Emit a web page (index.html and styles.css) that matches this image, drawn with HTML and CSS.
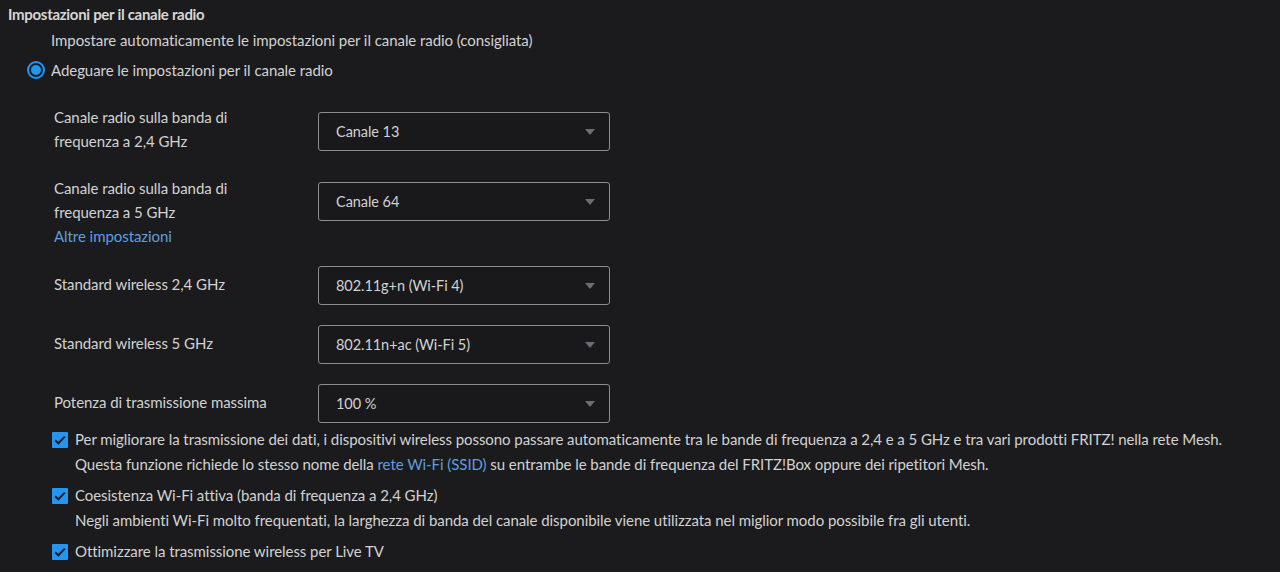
FILE: index.html
```html
<!DOCTYPE html>
<html lang="it">
<head>
<meta charset="utf-8">
<link rel="stylesheet" href="styles.css">
</head>
<body>
<div class="page">
  <h2 class="heading">Impostazioni per il canale radio</h2>
  <div class="option plain">Impostare automaticamente le impostazioni per il canale radio (consigliata)</div>
  <div class="option radio-row">
    <span class="radio"><span class="dot"></span></span>
    <span>Adeguare le impostazioni per il canale radio</span>
  </div>

  <div class="settings">
    <div class="row row1">
      <div class="label">Canale radio sulla banda di<br>frequenza a 2,4 GHz</div>
      <div class="select sel-offset7"><span>Canale 13</span><span class="arrow"></span></div>
    </div>
    <div class="row row2">
      <div class="label">Canale radio sulla banda di<br>frequenza a 5 GHz<br><a class="link" href="#">Altre impostazioni</a></div>
      <div class="select sel-offset6"><span>Canale 64</span><span class="arrow"></span></div>
    </div>
    <div class="row row-single">
      <div class="label single">Standard wireless 2,4 GHz</div>
      <div class="select"><span>802.11g+n (Wi-Fi 4)</span><span class="arrow"></span></div>
    </div>
    <div class="row row-single">
      <div class="label single">Standard wireless 5 GHz</div>
      <div class="select"><span>802.11n+ac (Wi-Fi 5)</span><span class="arrow"></span></div>
    </div>
    <div class="row row-single">
      <div class="label single">Potenza di trasmissione massima</div>
      <div class="select"><span>100 %</span><span class="arrow"></span></div>
    </div>
  </div>

  <div class="checks">
    <div class="check-item">
      <div class="check-line">
        <span class="checkbox"><svg width="12" height="10" viewBox="0 0 12 10"><path d="M1.2 5.2 L4.4 8.3 L10.8 1.6" fill="none" stroke="#1b1b1d" stroke-width="2"/></svg></span>
        <span>Per migliorare la trasmissione dei dati, i dispositivi wireless possono passare automaticamente tra le bande di frequenza a 2,4 e a 5 GHz e tra vari prodotti FRITZ! nella rete Mesh.</span>
      </div>
      <div class="desc">Questa funzione richiede lo stesso nome della <a class="link" href="#">rete Wi-Fi (SSID)</a> su entrambe le bande di frequenza del FRITZ!Box oppure dei ripetitori Mesh.</div>
    </div>
    <div class="check-item">
      <div class="check-line">
        <span class="checkbox"><svg width="12" height="10" viewBox="0 0 12 10"><path d="M1.2 5.2 L4.4 8.3 L10.8 1.6" fill="none" stroke="#1b1b1d" stroke-width="2"/></svg></span>
        <span>Coesistenza Wi-Fi attiva (banda di frequenza a 2,4 GHz)</span>
      </div>
      <div class="desc">Negli ambienti Wi-Fi molto frequentati, la larghezza di banda del canale disponibile viene utilizzata nel miglior modo possibile fra gli utenti.</div>
    </div>
    <div class="check-item">
      <div class="check-line">
        <span class="checkbox"><svg width="12" height="10" viewBox="0 0 12 10"><path d="M1.2 5.2 L4.4 8.3 L10.8 1.6" fill="none" stroke="#1b1b1d" stroke-width="2"/></svg></span>
        <span>Ottimizzare la trasmissione wireless per Live TV</span>
      </div>
    </div>
  </div>
</div>
</body>
</html>
```

FILE: styles.css
```css
html, body {
  margin: 0;
  padding: 0;
  background: #1b1b1d;
}
body {
  font-family: Lato, "Noto Sans", sans-serif;
  font-size: 15px;
  line-height: 24px;
  color: #d2d2d2;
  letter-spacing: -0.06px;
}
.page {
  padding: 2px 8px 0 8px;
}
.heading {
  margin: 0;
  font-size: 15px;
  font-weight: 700;
  line-height: 24px;
  color: #d6d6d6;
  letter-spacing: -0.3px;
}
.option {
  line-height: 24px;
}
.plain {
  margin-top: 2px;
  padding-left: 43px;
}
.radio-row {
  margin-top: 6px;
  display: flex;
  align-items: center;
  padding-left: 19px;
  gap: 6px;
}
.radio {
  width: 14px;
  height: 14px;
  border: 2px solid #2196f3;
  border-radius: 50%;
  display: flex;
  align-items: center;
  justify-content: center;
}
.dot {
  width: 10px;
  height: 10px;
  border-radius: 50%;
  background: #2196f3;
}
.settings {
  margin-top: 23px;
  padding-left: 46px;
  display: flex;
  flex-direction: column;
}
.row {
  display: flex;
  align-items: flex-start;
}
.row1 {
  margin-bottom: 23px;
}
.row2 {
  margin-bottom: 18px;
}
.row-single {
  margin-bottom: 20px;
}
.row-single:last-child {
  margin-bottom: 0;
}
.label {
  width: 264px;
  flex: none;
}
.label.single {
  margin-top: 6px;
}
.select {
  width: 273px;
  height: 37px;
  border: 1px solid #8c8c8c;
  border-radius: 3px;
  padding: 0 0 0 17px;
  display: flex;
  align-items: center;
  justify-content: space-between;
  background: #19191b;
  font-size: 14.5px;
}
.sel-offset7 { margin-top: 7px; }
.sel-offset6 { margin-top: 6px; }
.arrow {
  width: 0;
  height: 0;
  border-left: 5px solid transparent;
  border-right: 5px solid transparent;
  border-top: 6px solid #6b6e73;
  margin-right: 14px;
}
.link {
  color: #5d9fdf;
  text-decoration: none;
}
.checks {
  margin-top: 4px;
  padding-left: 44px;
  display: flex;
  flex-direction: column;
  gap: 6px;
}
.check-line {
  display: flex;
  align-items: center;
  gap: 7px;
  line-height: 25px;
}
.checkbox {
  width: 16px;
  height: 16px;
  background: #2196f3;
  border-radius: 1px;
  display: flex;
  align-items: center;
  justify-content: center;
  flex: none;
}
.desc {
  padding-left: 23px;
  line-height: 25px;
}
```
